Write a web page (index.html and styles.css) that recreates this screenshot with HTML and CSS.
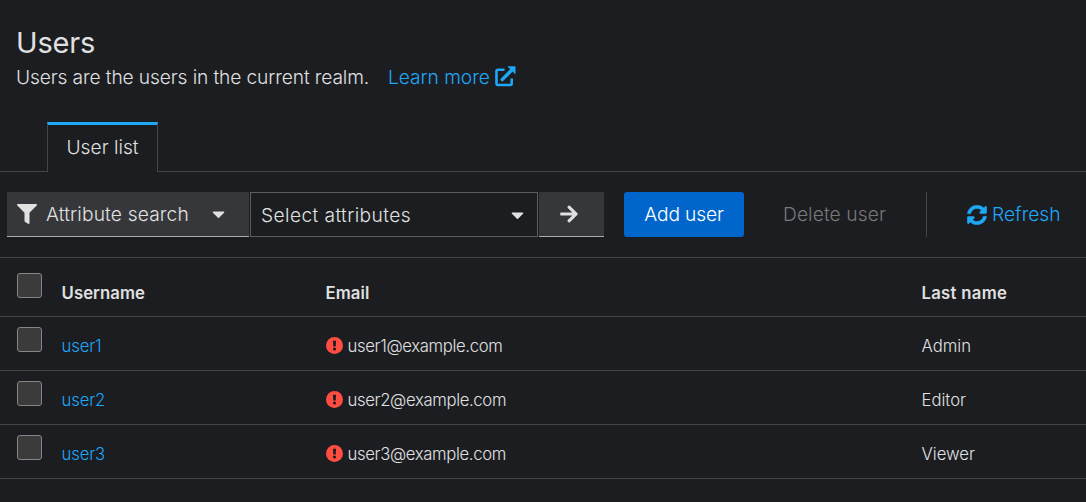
FILE: index.html
```
<!DOCTYPE html>
<html lang="en">
<head>
  <meta charset="UTF-8">
  <meta name="viewport" content="width=device-width, initial-scale=1.0">
  <title>Users</title>
  <link rel="stylesheet" href="styles.css">
</head>
<body>
  <header class="page-header">
    <h1>Users</h1>
    <p class="subtitle">
      <span class="subtitle-text">Users are the users in the current realm.</span>
      <a class="learn-more" href="#"><span>Learn more</span>
        <svg width="21" height="21" viewBox="0 0 21 21"><path d="M9.500 3.800H3Q1.500 3.800 1.500 5.300V17.500Q1.500 19 3 19H15.200Q16.700 19 16.700 17.500V12.500" fill="none" stroke="currentColor" stroke-width="2.600"/><path d="M7.200 13.600 16 4.800" stroke="currentColor" stroke-width="3.400" stroke-linecap="round"/><path d="M12.400.3H19.500Q20.500.3 20.500 1.300V8.400Z" fill="currentColor"/></svg>
      </a>
    </p>
  </header>

  <nav class="tabs">
    <a class="tab" href="#">User list</a>
  </nav>

  <div class="toolbar">
    <button class="attribute-search">
      <svg width="20" height="20" viewBox="0 0 512 512"><path fill="currentColor" d="M487.976 0H24.028C2.71 0-8.047 25.866 7.058 40.971L192 225.941V432c0 7.831 3.821 15.17 10.237 19.662l80 55.98C298.02 518.69 320 507.493 320 487.98V225.941l184.947-184.97C520.021 25.896 509.338 0 487.976 0z"/></svg>
      <span>Attribute search</span>
      <svg class="caret" width="13" height="20" viewBox="0 0 320 512"><path fill="currentColor" d="M31.3 192h257.3c17.8 0 26.7 21.5 14.1 34.1L174.1 354.8c-7.8 7.8-20.5 7.8-28.3 0L17.2 226.1C4.6 213.5 13.5 192 31.3 192z"/></svg>
    </button>
    <button class="select-attributes">
      <span>Select attributes</span>
      <svg class="caret" width="13" height="20" viewBox="0 0 320 512"><path fill="currentColor" d="M31.3 192h257.3c17.8 0 26.7 21.5 14.1 34.1L174.1 354.8c-7.8 7.8-20.5 7.8-28.3 0L17.2 226.1C4.6 213.5 13.5 192 31.3 192z"/></svg>
    </button>
    <button class="search-go" aria-label="Search">
      <svg width="18" height="20" viewBox="0 0 448 512"><path fill="currentColor" d="M190.500 66.900l22.200-22.200c9.400-9.400 24.600-9.400 33.900 0L441 239c9.400 9.400 9.400 24.600 0 33.900L246.600 467.300c-9.400 9.400-24.600 9.400-33.900 0l-22.200-22.200c-9.500-9.500-9.300-25 .4-34.300L311.400 296H24c-13.300 0-24-10.700-24-24v-32c0-13.300 10.700-24 24-24h287.400L190.900 101.200c-9.800-9.300-10-24.800-.4-34.300z"/></svg>
    </button>
    <button class="add-user">Add user</button>
    <button class="delete-user" disabled>Delete user</button>
    <button class="refresh">
      <svg width="20" height="20" viewBox="0 0 512 512"><path fill="currentColor" stroke="currentColor" stroke-width="14" d="M370.720 133.280C339.458 104.008 298.888 87.962 255.848 88c-77.458.068-144.328 53.178-162.791 126.850-1.344 5.363-6.122 9.150-11.651 9.150H24.103c-7.498 0-13.194-6.807-11.807-14.176C33.933 94.924 134.813 8 256 8c66.448 0 126.791 26.136 171.315 68.685L463.030 40.970C478.149 25.851 504 36.559 504 57.941V192c0 13.255-10.745 24-24 24H345.941c-21.382 0-32.090-25.851-16.971-40.971l41.750-41.749zM32 296h134.059c21.382 0 32.090 25.851 16.971 40.971l-41.750 41.750c31.262 29.273 71.835 45.319 114.876 45.280 77.418-.07 144.315-53.144 162.787-126.849 1.344-5.363 6.122-9.150 11.651-9.150h57.304c7.498 0 13.194 6.807 11.807 14.176C478.067 417.076 377.187 504 256 504c-66.448 0-126.791-26.136-171.315-68.685L48.970 471.030C33.851 486.149 8 475.441 8 454.059V320c0-13.255 10.745-24 24-24z"/></svg>
      <span>Refresh</span>
    </button>
  </div>

  <table class="users">
    <thead>
      <tr>
        <th class="check"><input type="checkbox"></th>
        <th class="username">Username</th>
        <th class="email">Email</th>
        <th class="last-name">Last name</th>
      </tr>
    </thead>
    <tbody>
      <tr>
        <td class="check"><input type="checkbox"></td>
        <td><a href="#">user1</a></td>
        <td class="email"><svg width="17" height="17" viewBox="0 0 17 17"><circle cx="8.500" cy="8.500" r="8.500"/><path d="M6.900 3.700H10.100L9.700 9.500H7.300Z"/><circle cx="8.500" cy="12" r="1.600"/></svg><span>user1@example.com</span></td>
        <td>Admin</td>
      </tr>
      <tr>
        <td class="check"><input type="checkbox"></td>
        <td><a href="#">user2</a></td>
        <td class="email"><svg width="17" height="17" viewBox="0 0 17 17"><circle cx="8.500" cy="8.500" r="8.500"/><path d="M6.900 3.700H10.100L9.700 9.500H7.300Z"/><circle cx="8.500" cy="12" r="1.600"/></svg><span>user2@example.com</span></td>
        <td>Editor</td>
      </tr>
      <tr>
        <td class="check"><input type="checkbox"></td>
        <td><a href="#">user3</a></td>
        <td class="email"><svg width="17" height="17" viewBox="0 0 17 17"><circle cx="8.500" cy="8.500" r="8.500"/><path d="M6.900 3.700H10.100L9.700 9.500H7.300Z"/><circle cx="8.500" cy="12" r="1.600"/></svg><span>user3@example.com</span></td>
        <td>Viewer</td>
      </tr>
    </tbody>
  </table>
</body>
</html>
```
FILE: styles.css
```
:root {
  --bg-color: #1b1d21;
  --control-color: #36373a;
  --text-color: #e0e0e0;
  --link-color: #1fa7f8;
  --border-color: #444548;
}

* {
  box-sizing: border-box;
}

body {
  margin: 0;
  font-family: Inter, sans-serif;
  font-size: 19.2px;
  font-weight: 350;
  background-color: var(--bg-color);
  color: var(--text-color);
}

svg {
  display: block;
  flex: none;
}

a {
  color: var(--link-color);
  text-decoration: none;
}

.page-header {
  padding: 24px 16px 0;
  height: 122px;
}

h1 {
  margin: 0;
  font-size: 29px;
  font-weight: 400;
  line-height: 38px;
  letter-spacing: -0.2px;
}

.subtitle {
  display: flex;
  margin: 0;
  line-height: 30px;
}

.subtitle-text {
  width: 372px;
  letter-spacing: -0.12px;
  white-space: nowrap;
}

.learn-more {
  display: flex;
  gap: 5px;
  padding-bottom: 4px;
  letter-spacing: -0.05px;
}

.learn-more svg {
  margin-top: 4px;
}

.tabs {
  display: flex;
  height: 50px;
}

.tabs::before {
  content: "";
  width: 47px;
  border-bottom: 1px solid var(--border-color);
}

.tabs::after {
  content: "";
  flex: 1;
  border-bottom: 1px solid var(--border-color);
}

.tab {
  width: 111px;
  border: 1px solid var(--border-color);
  border-width: 0 1px;
  border-top: 3px solid var(--link-color);
  color: var(--text-color);
  line-height: 44px;
  text-align: center;
}

.toolbar {
  display: flex;
  height: 85px;
  padding: 20px 7px;
}

button {
  display: flex;
  align-items: center;
  height: 45px;
  margin: 0;
  padding: 0;
  border: 0;
  background: none;
  color: var(--text-color);
  font: inherit;
  white-space: nowrap;
}

.attribute-search {
  width: 242px;
  padding: 0 24px 0 10px;
  gap: 9px;
  background: var(--control-color);
  border-bottom: 1px solid #aaabac;
  letter-spacing: 0.15px;
}

.caret {
  margin-left: auto;
}

.select-attributes {
  width: 288px;
  margin-left: 1px;
  padding: 0 13px 0 10px;
  border: 1px solid #5c5d60;
  letter-spacing: 0.4px;
}

.search-go {
  justify-content: center;
  width: 65px;
  margin-left: 1px;
  padding-right: 5px;
  background: var(--control-color);
  border-bottom: 1px solid #aaabac;
}

.add-user {
  justify-content: center;
  width: 120px;
  margin-left: 20px;
  padding-bottom: 2px;
  border-radius: 3px;
  background: #0066cc;
  color: #fff;
  letter-spacing: -0.15px;
}

.delete-user {
  width: 183px;
  padding: 0 0 2px 39px;
  border-right: 1px solid var(--border-color);
  color: #77787a;
  letter-spacing: 0.1px;
}

.refresh {
  gap: 5px;
  margin-left: 40px;
  color: var(--link-color);
}

.refresh span {
  padding-bottom: 2px;
}

.users {
  width: 100%;
  table-layout: fixed;
  border-collapse: separate;
  border-spacing: 0;
  border-top: 1px solid var(--border-color);
  font-size: 16.7px;
}

.users th,
.users td {
  height: 54px;
  padding: 4px 0 0 0.5px;
  border-bottom: 1px solid var(--border-color);
  text-align: left;
  line-height: 24px;
}

.users th {
  height: 59px;
  padding-top: 12px;
  font-weight: 600;
  letter-spacing: 0.1px;
}

.users th.last-name {
  letter-spacing: 0.3px;
}

.users th.check {
  width: 61px;
  padding: 0 0 3px 17px;
}

.users td.check {
  padding: 0 0 9px 17px;
}

.users th.username {
  width: 264px;
}

.users th.email {
  width: 596px;
}

.users td.email span {
  vertical-align: middle;
  letter-spacing: -0.35px;
}

.users td a {
  letter-spacing: -0.15px;
}

.users td.email svg {
  display: inline-block;
  margin: -2px 5px 0 0;
  vertical-align: middle;
  fill: #ff4d41;
}

.users td.email svg path,
.users td.email svg circle + path + circle {
  fill: var(--bg-color);
}

input[type=checkbox] {
  display: block;
  width: 25px;
  height: 25px;
  margin: 0;
  appearance: none;
  border: 1px solid #858585;
  border-radius: 3px;
  background: #3b3b3b;
}
```
